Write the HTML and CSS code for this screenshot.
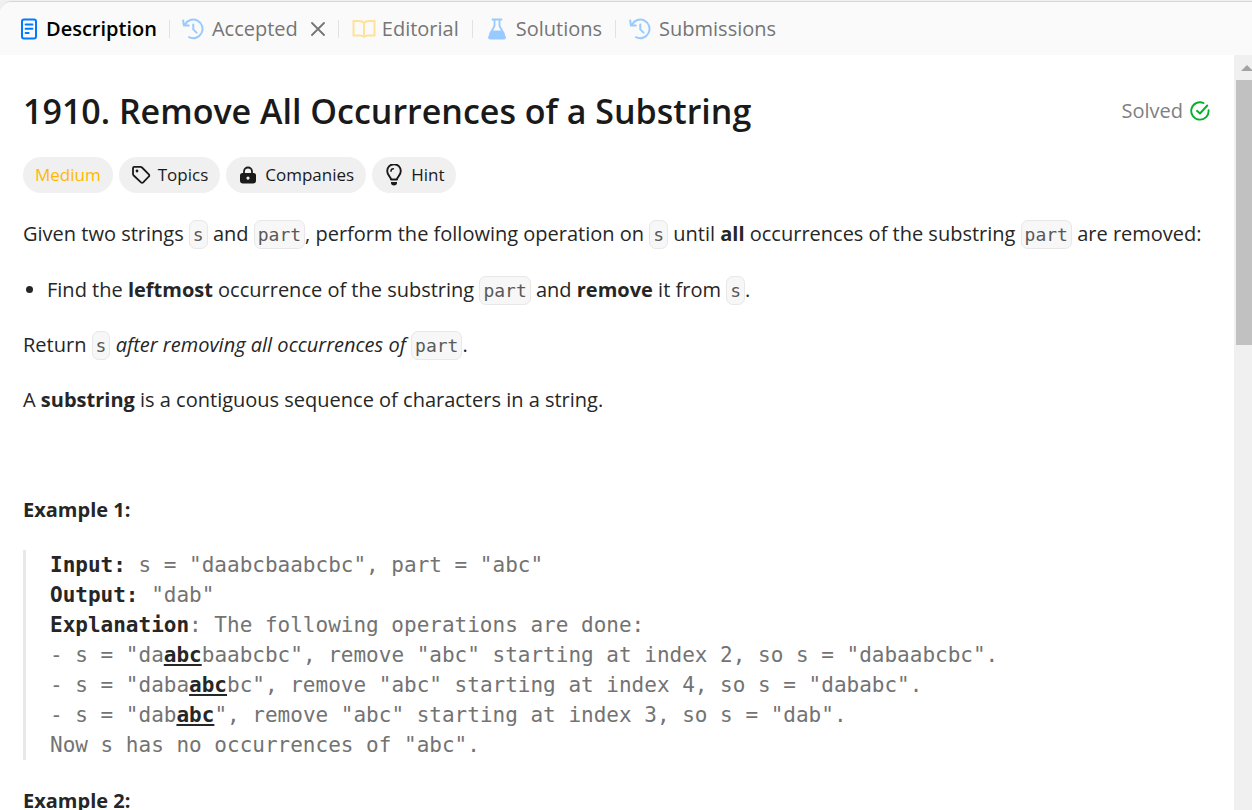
FILE: index.html
```html
<!DOCTYPE html>
<html lang="en">
<head>
<meta charset="utf-8">
<title>1910. Remove All Occurrences of a Substring</title>
<link rel="stylesheet" href="styles.css">
</head>
<body>
<svg class="defs" aria-hidden="true">
  <symbol id="history" viewBox="0 0 22 22"><g fill="none" stroke="currentColor" stroke-width="2" stroke-linecap="round" stroke-linejoin="round"><path d="M3 6.500A9.300 9.300 0 1 1 7 19.200M1.200 2.400l.6 5h5M11.300 6.400v5l3.200 3.200"/></g></symbol>
</svg>
<div class="panel">
  <nav class="tabs">
    <button class="tab active"><svg class="ic doc" viewBox="0 0 18 22"><g fill="none" stroke="currentColor" stroke-width="2" stroke-linecap="round"><rect x="2" y="1.5" width="14" height="19" rx="2"/><path d="M5.6 6.5h6.8M5.6 10.7h6.8M5.6 14.9h3"/></g></svg>Description</button>
    <span class="sep"></span>
    <button class="tab"><svg class="ic"><use href="#history"/></svg>Accepted</button>
    <button class="close" aria-label="Close"><svg viewBox="0 0 14 14"><path d="M1 1l12 12M13 1L1 13" fill="none" stroke="currentColor" stroke-width="1.8" stroke-linecap="round"/></svg></button>
    <span class="sep"></span>
    <button class="tab editorial"><svg class="ic book" viewBox="0 0 24 20"><path d="M12 4C10.500 2.200 9 2 7 2H1.500v14.500H8c2 0 3.200.5 4 1.500.8-1 2-1.500 4-1.500h6.500V2H17c-2 0-3.500.2-5 2zm0 0v14" fill="none" stroke="currentColor" stroke-width="2" stroke-linejoin="round"/></svg>Editorial</button>
    <span class="sep"></span>
    <button class="tab"><svg class="ic" viewBox="-2 0 22 22"><path d="M4.500 1.500h9M6.500 2v6L2 16M11.500 2v6L16 16" fill="none" stroke="currentColor" stroke-width="1.800" stroke-linecap="round"/><path d="M3.600 12.500h10.800l3.200 5.700c.8 1.600 0 3.300-1.800 3.300H2.200c-1.800 0-2.600-1.700-1.800-3.300z" fill="currentColor"/></svg>Solutions</button>
    <span class="sep"></span>
    <button class="tab"><svg class="ic"><use href="#history"/></svg>Submissions</button>
  </nav>
  <div class="view">
    <main class="content">
      <header class="head">
        <h1>1910. Remove All Occurrences of a Substring</h1>
        <div class="solved">Solved<svg viewBox="0 0 20 20"><g fill="none" stroke="currentColor" stroke-width="1.900" stroke-linecap="round" stroke-linejoin="round"><path d="M18.600 9.200A8.700 8.700 0 1 1 13.500 2"/><path d="M7 9.800l3 2.700 7.300-8"/></g></svg></div>
      </header>
      <div class="tags">
        <span class="tag medium">Medium</span>
        <button class="tag"><svg viewBox="0 0 20 20"><path d="M2 3.200C2 2.400 2.500 1.900 3.200 1.900h6.300c.6 0 1 .2 1.500.6l6.800 6.800c.7.7.7 1.500 0 2.200l-5.600 5.900c-.7.700-1.500.700-2.200 0L2.700 10.500C2.200 10 2 9.600 2 9z" fill="none" stroke="currentColor" stroke-width="1.800" stroke-linejoin="round"/><circle cx="6" cy="6" r="1.400" fill="currentColor"/></svg>Topics</button>
        <button class="tag"><svg viewBox="0 0 20 20"><path d="M6 9V6.500a4 4 0 0 1 8 0V9" fill="none" stroke="currentColor" stroke-width="1.800"/><path fill-rule="evenodd" d="M4.500 8h11c1.600 0 2.500.9 2.500 2.500v5c0 1.900-1 3-3 3H5c-2 0-3-1.100-3-3v-5C2 8.900 2.900 8 4.500 8zM10 11.500a1.600 1.600 0 1 0 0 3.200 1.600 1.600 0 0 0 0-3.200z" fill="currentColor"/></svg>Companies</button>
        <button class="tag"><svg viewBox="0 0 20 22"><path d="M7 15.500c0-2.800-3.800-4-3.800-8.500a6.800 6.800 0 0 1 13.600 0c0 4.500-3.800 5.700-3.800 8.500z" fill="none" stroke="currentColor" stroke-width="1.900" stroke-linejoin="round"/><path d="M7 7.200C7 5.800 8 4.800 9.400 4.800" fill="none" stroke="currentColor" stroke-width="1.500" stroke-linecap="round"/><path d="M7 18h6v1c0 1.500-1.200 2.500-3 2.500S7 20.500 7 19z" fill="currentColor"/></svg>Hint</button>
      </div>
      <div class="prose">
        <p>Given two strings <code>s</code> and <code>part</code>, perform the following operation on <code>s</code> until <b>all</b> occurrences of the substring <code>part</code> are removed:</p>
        <ul><li>Find the <b>leftmost</b> occurrence of the substring <code>part</code> and <b>remove</b> it from <code>s</code>.</li></ul>
        <p>Return <code>s</code> <em>after removing all occurrences of </em><code>part</code>.</p>
        <p>A <b>substring</b> is a contiguous sequence of characters in a string.</p>
        <p>&nbsp;</p>
        <p><b>Example 1:</b></p>
<pre><b>Input:</b> s = "daabcbaabcbc", part = "abc"
<b>Output:</b> "dab"
<b>Explanation</b>: The following operations are done:
- s = "da<b><u>abc</u></b>baabcbc", remove "abc" starting at index 2, so s = "dabaabcbc".
- s = "daba<b><u>abc</u></b>bc", remove "abc" starting at index 4, so s = "dababc".
- s = "dab<b><u>abc</u></b>", remove "abc" starting at index 3, so s = "dab".
Now s has no occurrences of "abc".</pre>
        <p><b>Example 2:</b></p>
      </div>
    </main>
    <div class="scrollbar"><span class="arrow"></span><span class="thumb"></span></div>
  </div>
</div>
</body>
</html>
```
FILE: styles.css
```css
* { box-sizing: border-box; }
body {
  margin: 0;
  height: 100vh;
  overflow: hidden;
  background: #f0f0f0;
  color: #262626;
  font: 20px/30px "Open Sans", "Noto Sans", sans-serif;
  padding-top: 1px;
}
.defs { position: absolute; width: 0; height: 0; }
button {
  font: inherit;
  color: inherit;
  background: none;
  border: 0;
  padding: 0;
  white-space: nowrap;
}
.panel {
  height: 100%;
  display: flex;
  flex-direction: column;
  background: #fff;
  border-top: 1px solid #d5d5d5;
  border-top-left-radius: 12px;
  overflow: hidden;
}
.tabs {
  flex: none;
  height: 53px;
  display: flex;
  align-items: center;
  padding: 0 20px;
  background: #fafafa;
  color: #757575;
}
.tab { display: flex; align-items: center; gap: 8px; }
.active { color: #000; font-weight: 600; }
.editorial { gap: 6px; }
.ic { flex: none; width: 22px; height: 22px; color: #99caff; }
.doc { width: 18px; color: #007bff; }
.book { width: 24px; height: 20px; color: #ffe299; }
.sep { width: 1px; height: 18px; margin: 0 12px; background: #e2e2e2; }
.close { display: flex; margin-left: 13px; }
.close svg { width: 14px; height: 14px; }
.close ~ .sep { margin: 0 13px; }
.view { flex: 1; min-height: 0; display: flex; }
.content { flex: 1; min-width: 0; overflow: hidden; padding: 32px 24px 0 23px; }
.head { display: flex; justify-content: space-between; align-items: center; }
h1 { margin: 0; font-size: 34px; line-height: 48px; font-weight: 600; color: #1a1a1a; }
.solved { display: flex; align-items: center; gap: 7px; color: #808080; }
.solved svg { width: 20px; height: 20px; color: #02b128; }
.tags { display: flex; gap: 6px; margin-top: 22px; }
.tag {
  display: flex;
  align-items: center;
  gap: 7px;
  height: 36px;
  padding: 0 12px;
  border-radius: 18px;
  background: #f0f0f0;
  color: #1a1a1a;
  font-size: 17px;
}
.tag svg { width: 20px; height: 22px; }
.medium { color: #ffb800; }
.prose { margin-top: 26px; }
p { margin: 0 0 25px; }
ul { margin: 26px 0 25px; padding-left: 24px; }
b { font-weight: 700; }
code {
  font: 18px/24px "DejaVu Sans Mono", monospace;
  color: #595959;
  background: #f7f7f7;
  border: 1px solid #e8e8e8;
  border-radius: 7px;
  padding: 3px;
}
pre {
  margin: 0 0 26px;
  padding-left: 24px;
  border-left: 3px solid #e8e8e8;
  font: 21px/30px "DejaVu Sans Mono", monospace;
  color: #737373;
}
pre b { color: #262626; }
.scrollbar { flex: none; width: 18px; background: #f0f0f0; padding: 10px 0 0 2px; display: flex; flex-direction: column; }
.arrow { width: 0; height: 0; margin: 0 0 9px 5px; border: 6px solid transparent; border-top: 0; border-bottom-color: #a3a3a3; }
.thumb { height: 265px; background: #c1c1c1; }
```
